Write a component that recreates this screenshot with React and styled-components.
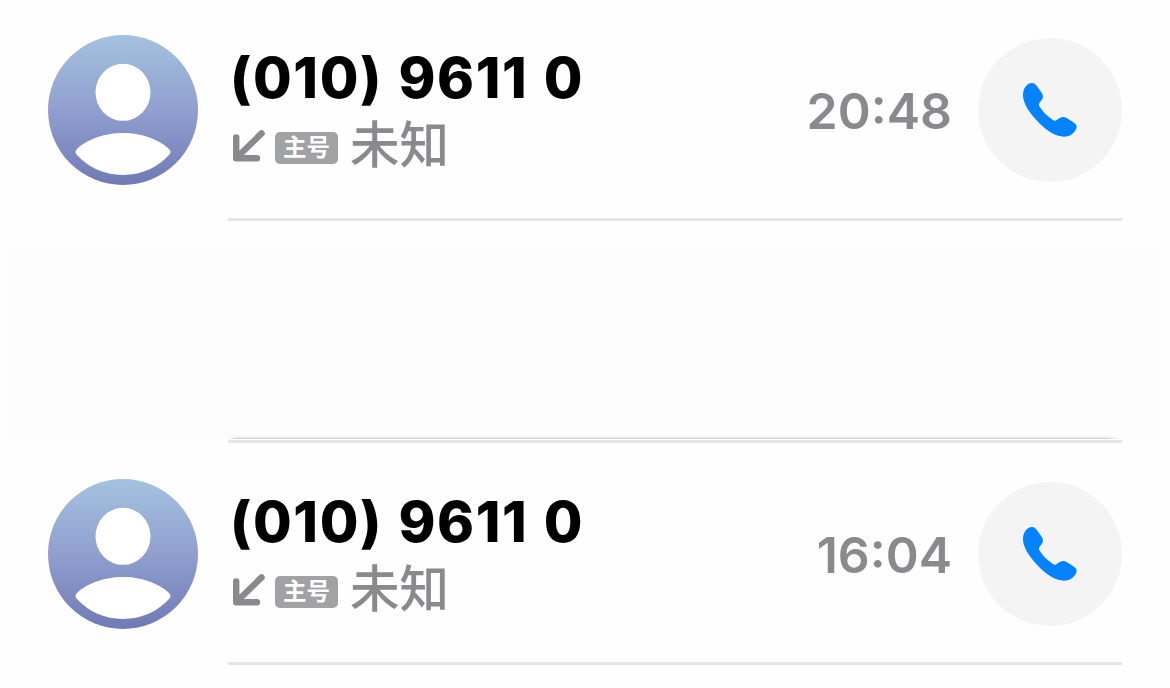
import React from 'react';
import styled, { createGlobalStyle } from 'styled-components';

// Global styles
const GlobalStyle = createGlobalStyle`
    body {
        margin: 0;
        background: #fefefe;
        font-family: Inter, 'Noto Sans CJK SC', sans-serif;
        overflow: hidden;
    }
`;

/* --- Call list --- */
const CallList = styled.main`
    width: 1170px;
    height: 688px;
    box-sizing: border-box;
    overflow: hidden;
    background: #fefefe;
`;

const CallRow = styled.article`
    display: flex;
    height: ${props => (props.$first ? 221 : 222)}px;
    box-sizing: border-box;
    padding: 0 48px;
`;

const Avatar = styled.svg`
    flex: none;
    width: 150px;
    height: 150px;
    margin-top: ${props => (props.$first ? 35 : 36)}px;
    margin-right: 30px;
`;

const RowBody = styled.div`
    display: flex;
    flex: 1;
    align-items: center;
    box-sizing: border-box;
    padding-top: ${props => (props.$first ? 2 : 3)}px;
    border-bottom: 3px solid #e5e5e5;
`;

const Details = styled.div`
    flex: 1;
    height: 144px;
`;

const PhoneNumber = styled.h2`
    margin: 6px 0 0 2px;
    color: #000;
    font-size: 56px;
    line-height: 68px;
    font-weight: 800;
    letter-spacing: 1.6px;
    word-spacing: 1.5px;
    white-space: pre;
`;

const Meta = styled.div`
    display: flex;
    align-items: center;
    height: 50px;
    margin: 11px 0 0 5px;
`;

const ArrowIcon = styled.svg`
    width: 33px;
    height: 32px;
    margin-top: -5px;
`;

const LineBadge = styled.span`
    width: 63px;
    height: 32px;
    margin: 0 12px 0 9px;
    border-radius: 5px;
    background: #a2a2a4;
    color: #fff;
    font-family: 'Noto Sans CJK SC', sans-serif;
    font-size: 23.5px;
    line-height: 29px;
    font-weight: 700;
    text-align: center;
`;

const Location = styled.span`
    margin-top: -13px;
    color: #8a8a8d;
    font-family: 'Noto Sans CJK SC', sans-serif;
    font-size: 49.5px;
    line-height: 50px;
    font-weight: 500;
`;

const Time = styled.time`
    margin-right: 26px;
    padding-top: 2px;
    color: #8a8a8d;
    font-size: 50px;
    line-height: 60px;
    font-weight: 600;
`;

const CallButton = styled.button`
    display: flex;
    align-items: center;
    justify-content: center;
    flex: none;
    width: 144px;
    height: 144px;
    padding: 0;
    border: none;
    border-radius: 50%;
    background: #f4f4f4;
    cursor: pointer;
`;

const EmptyRow = styled.div`
    display: flex;
    flex-direction: column;
    justify-content: flex-end;
    height: 222px;
    box-sizing: border-box;
    padding: 26px 8px 0;
`;

const EmptyPanel = styled.div`
    display: flex;
    flex: 1;
    align-items: flex-end;
    padding: 0 40px 0 220px;
    background: #fdfdfd;
`;

const SoftLine = styled.div`
    flex: 1;
    height: 4px;
    background: linear-gradient(#fdfdfd, #f0f0f0 60%, #c8c8c8);
    mask-image: linear-gradient(90deg, transparent, #000 8px, #000 calc(100% - 16px), transparent);
`;

const EmptyDivider = styled.div`
    height: 3px;
    margin: 1px 40px 0 220px;
    background: #e5e5e5;
`;

function ContactAvatar({ id, first }) {
    return (
        <Avatar $first={first} viewBox="0 0 150 150" aria-hidden="true">
            <defs>
                <linearGradient id={id} x1="0" y1="0" x2="0" y2="1">
                    <stop offset="0" stopColor="#a4c2df" />
                    <stop offset="0.5" stopColor="#909fcf" />
                    <stop offset="1" stopColor="#707ab4" />
                </linearGradient>
            </defs>
            <circle cx="75" cy="75" r="75" fill={`url(#${id})`} />
            <ellipse cx="75" cy="57.3" rx="27.5" ry="28.5" fill="#fff" />
            <path
                d="M75 98C54 98 37 106 29 114C27 116 27 118 29 120C39 131 55 140 75 140C95 140 111 131 121 120C123 118 123 116 121 114C113 106 96 98 75 98Z"
                fill="#fff"
            />
        </Avatar>
    );
}

function Call({ id, number, time, first }) {
    return (
        <CallRow $first={first}>
            <ContactAvatar id={id} first={first} />
            <RowBody $first={first}>
                <Details>
                    <PhoneNumber>{number}</PhoneNumber>
                    <Meta>
                        <ArrowIcon viewBox="0 0 33 32" fill="none" stroke="#8a8a8d" strokeWidth="6.4" strokeLinecap="round" strokeLinejoin="round">
                            <path d="M3.2 7.4V28.2H24M4.6 26.8L28.6 3.4" />
                        </ArrowIcon>
                        <LineBadge>主号</LineBadge>
                        <Location>未知</Location>
                    </Meta>
                </Details>
                <Time>{time}</Time>
                <CallButton aria-label={number}>
                    <svg width="80" height="80" viewBox="0 0 240 240" aria-hidden="true">
                        <path
                            d="M39 76C39 56 50 39 66 39C73 39 77 44 82 50L95 68C101 77 100 85 93 93C87 100 85 104 89 110C99 126 112 138 129 150C134 154 138 153 143 148C151 141 160 138 170 144L190 157C201 164 202 171 197 180C189 193 178 200 162 200C140 200 114 186 88 160C57 128 39 99 39 76Z"
                            fill="#0583ff"
                        />
                    </svg>
                </CallButton>
            </RowBody>
        </CallRow>
    );
}

export default function App() {
    return (
        <>
            <GlobalStyle />
            <CallList>
                <Call id="avatar-1" number="(010) 9611 0" time="20:48" first />
                <EmptyRow>
                    <EmptyPanel>
                        <SoftLine />
                    </EmptyPanel>
                    <EmptyDivider />
                </EmptyRow>
                <Call id="avatar-2" number="(010) 9611 0" time="16:04" />
            </CallList>
        </>
    );
}
